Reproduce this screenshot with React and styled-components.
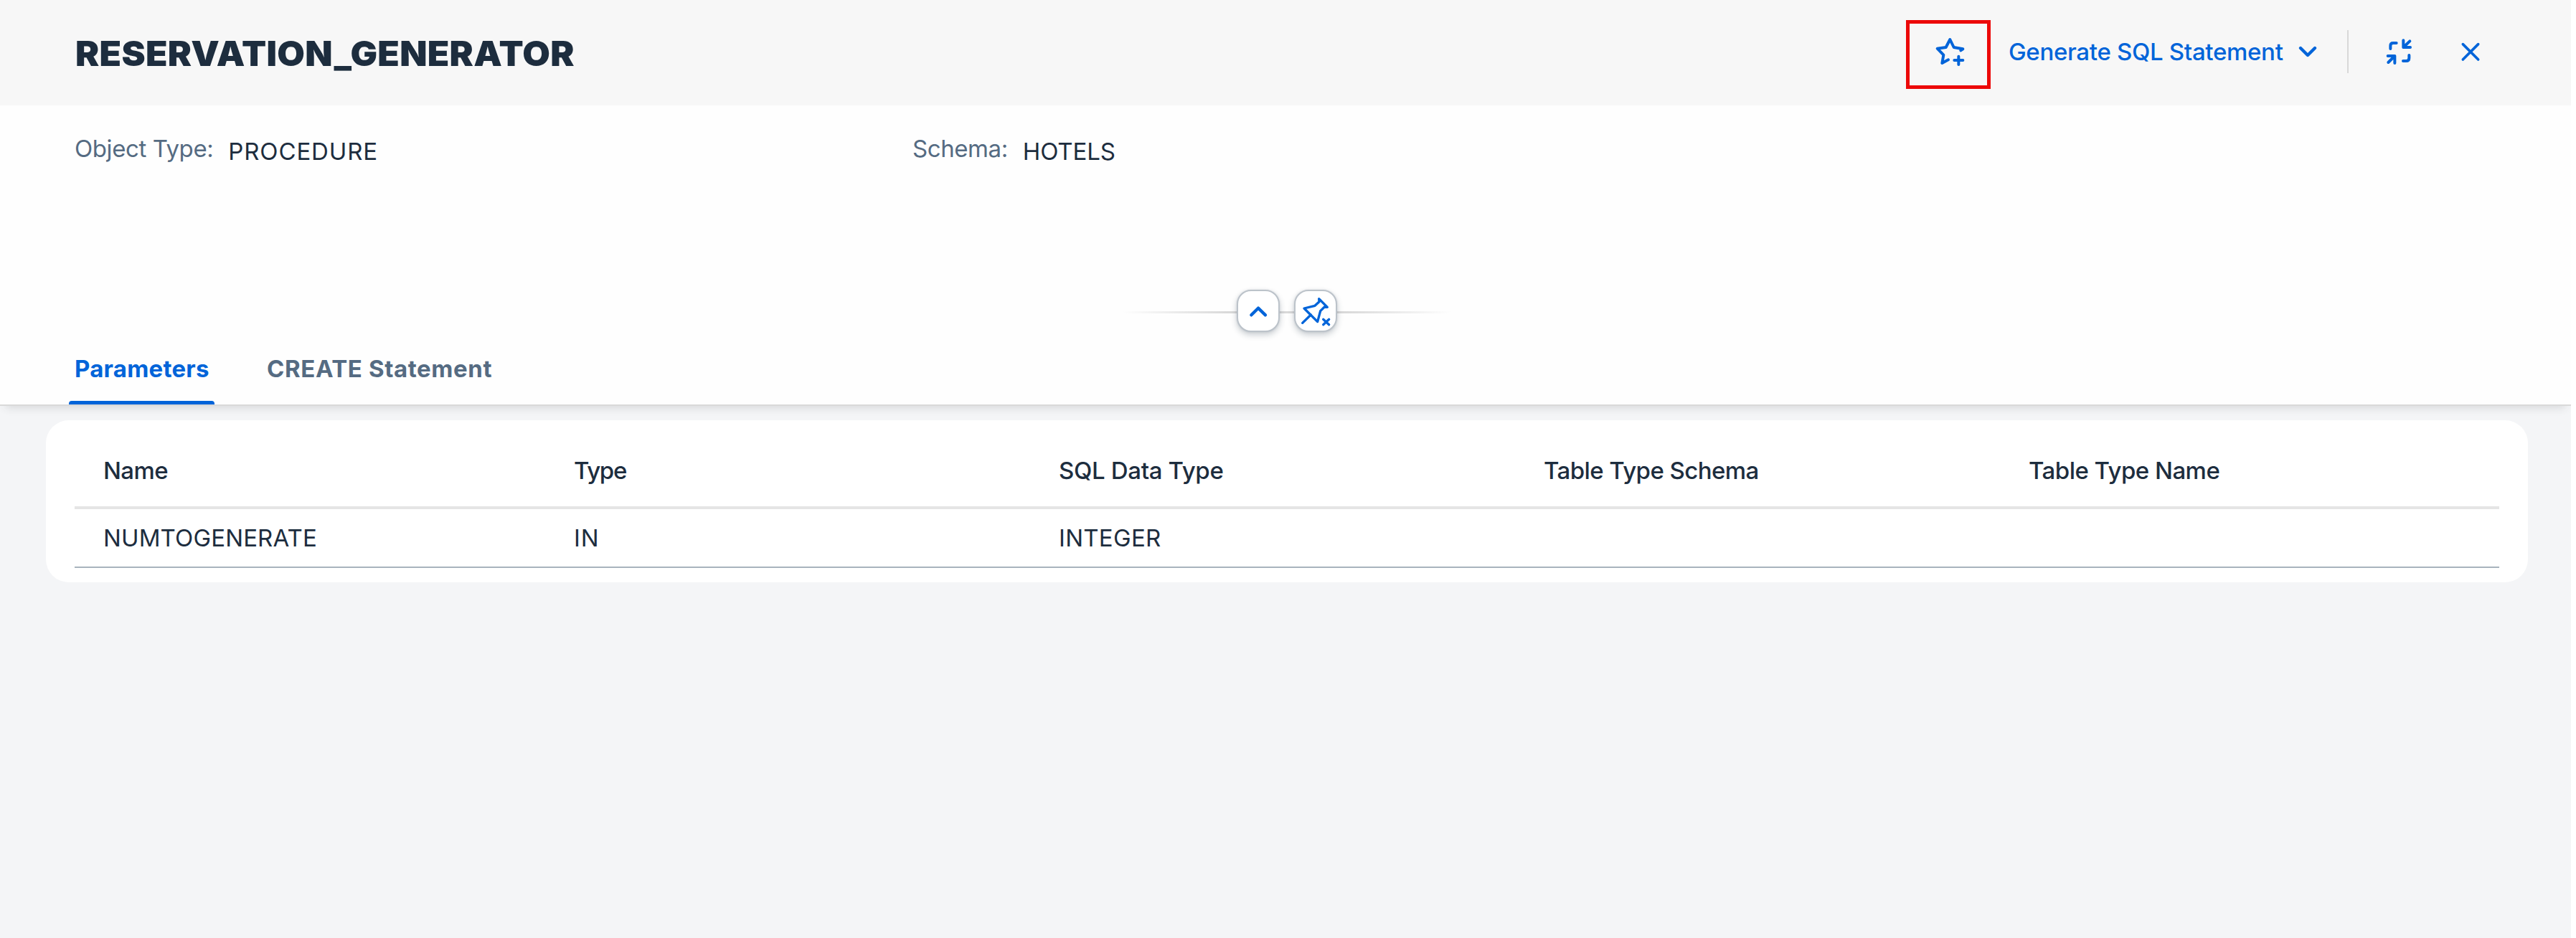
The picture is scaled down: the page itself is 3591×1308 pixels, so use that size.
import React from "react";
import styled, { createGlobalStyle } from "styled-components";

const BLUE = "#0064d9";
const INK = "#1d2d3e";
const MUTED = "#556b82";

const GlobalStyle = createGlobalStyle`
  *, *::before, *::after { box-sizing: border-box; }
  body { margin: 0; background: #fff; }
  button { font: inherit; color: inherit; background: none; border: 0; padding: 0; margin: 0; }
`;

const Page = styled.div`
  display: flex;
  flex-direction: column;
  width: 3584px;
  height: 1308px;
  overflow: hidden;
  background: #fff;
  color: ${INK};
  font-family: Inter, "Liberation Sans", sans-serif;
  font-size: 33px;
  line-height: 40px;
  white-space: nowrap;
`;

const TitleBar = styled.header`
  display: flex;
  justify-content: space-between;
  height: 147px;
  padding: 0 126px 0 104.5px;
  background: #f7f7f7;
`;

const Title = styled.h1`
  margin: 1px 0 0;
  font-size: 47.5px;
  font-weight: 900;
  line-height: 147px;
  letter-spacing: 0.25px;
  transform: scaleX(1.05);
  transform-origin: left center;
`;

const Actions = styled.div`
  display: flex;
  align-items: center;
  height: 144px;
  color: ${BLUE};
`;

const Highlight = styled.div`
  align-self: flex-start;
  width: 118px;
  height: 96px;
  margin-top: 28px;
  padding: 15px 0 0 33px;
  border: 5px solid #ec0808;
`;

const MenuButton = styled.button`
  display: flex;
  align-items: center;
  justify-content: space-between;
  width: 430px;
  margin-left: 25px;
  font-weight: 550;
  letter-spacing: -0.31px;
`;

const IconButton = styled.button`
  display: flex;
  margin-left: ${(p) => p.$gap || 0}px;
`;

const Divider = styled.div`
  width: 2px;
  height: 60px;
  margin-left: 42px;
  background: #d9d9d9;
`;

const Icon = styled.svg`
  display: block;
  flex: none;
  width: ${(p) => p.$size}px;
  height: ${(p) => p.$size}px;
  fill: none;
  stroke: currentColor;
  stroke-linecap: round;
  stroke-linejoin: round;
`;

const ObjectHeader = styled.section`
  position: relative;
  z-index: 1;
  display: flex;
  flex-direction: column;
  height: 419px;
  background: #fefefe;
  border-bottom: 2px solid #d9d9d9;
  box-shadow: 0 10px 12px -8px rgba(50, 53, 58, 0.16);
`;

const Fields = styled.dl`
  display: grid;
  grid-template-columns: 1168px 1168px;
  align-content: start;
  height: 257px;
  margin: 0;
  padding: 40px 0 0 104px;
`;

const Field = styled.div`
  display: flex;
  gap: 21px;
`;

const FieldLabel = styled.dt`
  color: ${MUTED};
  letter-spacing: -0.42px;
`;

const FieldValue = styled.dd`
  margin: 4px 0 0;
  letter-spacing: ${(p) => p.$track || 0}px;
`;

const ToggleStrip = styled.div`
  display: flex;
  justify-content: center;
  gap: 20px;
  width: 458px;
  height: 60px;
  margin-left: 1565px;
  background: linear-gradient(90deg, rgba(217, 217, 217, 0), #d9d9d9 32%, #d9d9d9 68%, rgba(217, 217, 217, 0)) 0 30px / 100% 3px no-repeat;
`;

const ToggleButton = styled.button`
  width: 60px;
  height: 59px;
  color: ${BLUE};
  background: #fff;
  border: 2px solid #bcc3ca;
  border-radius: 20px;
  box-shadow: 0 4px 8px rgba(34, 53, 72, 0.24), 0 0 3px rgba(34, 53, 72, 0.12);
`;

const Tabs = styled.nav`
  display: flex;
  gap: 65px;
  height: 100px;
  padding-left: 96px;
`;

const Tab = styled.button`
  display: flex;
  flex-direction: column;
  justify-content: space-between;
  padding-top: 30px;
  color: ${(p) => (p.$active ? BLUE : MUTED)};
  font-weight: ${(p) => (p.$active ? 700 : 680)};
  letter-spacing: ${(p) => p.$track}px;
  width: ${(p) => (p.$active ? "203px" : "auto")};

  span { padding: 0 8px; }

  &::after {
    content: "";
    width: 100%;
    height: 5px;
    border-radius: 4px 4px 0 0;
    background: ${(p) => (p.$active ? BLUE : "transparent")};
  }
`;

const Content = styled.main`
  flex: 1;
  padding: 20px 60px 0 64px;
  background: #f4f5f7;
`;

const Card = styled.div`
  position: relative;
  z-index: 2;
  height: 226px;
  padding: 0 40px;
  background: #fff;
  border-radius: 32px;
`;

const Row = styled.div`
  display: grid;
  grid-template-columns: 656px 676px 676px 676px 1fr;
  align-items: center;
  height: ${(p) => (p.$head ? 124 : 82)}px;
  padding-top: ${(p) => (p.$head ? 20 : 0)}px;
  border-bottom: ${(p) => (p.$head ? "4px solid #e5e5e5" : "2px solid #a8b3bd")};
  font-weight: ${(p) => (p.$head ? 550 : 400)};
`;

const Cell = styled.div`
  padding-left: 40px;
  letter-spacing: ${(p) => p.$track || 0}px;
`;

const columns = [
  { label: "Name", track: -0.6 },
  { label: "Type", track: -1.3 },
  { label: "SQL Data Type", track: -0.34 },
  { label: "Table Type Schema", track: -0.58 },
  { label: "Table Type Name", track: -0.53 },
];

const values = [
  { label: "NUMTOGENERATE", track: 0.13 },
  { label: "IN", track: 0.9 },
  { label: "INTEGER", track: 0.28 },
  { label: "" },
  { label: "" },
];

export default function App() {
  return (
    <>
      <GlobalStyle />
      <Page>
        <TitleBar>
          <Title>RESERVATION_GENERATOR</Title>
          <Actions>
            <Highlight>
              <IconButton aria-label="Add to favorites">
                <Icon $size={48} viewBox="165 144 144 144" strokeWidth="12">
                  <path d="M228 250 L202 264 L208 230 L182 203 L218 198 L235 165 L251 198 L289 205 L280 211" />
                  <path d="M271 236 V270 M253 252 H289" />
                </Icon>
              </IconButton>
            </Highlight>
            <MenuButton>
              Generate SQL Statement
              <Icon $size={26} viewBox="312 177 78 78" strokeWidth="13">
                <path d="M321 201 L351 231 L381 201" />
              </Icon>
            </MenuButton>
            <Divider />
            <IconButton $gap={51} aria-label="Exit full screen">
              <Icon $size={40} viewBox="675 156 120 120" strokeWidth="12">
                <path d="M697 204 V191 Q697 180 708 180 H722" />
                <path d="M751 169 V198 H780 M751 198 L778 172" />
                <path d="M686 234 H715 V264 M715 234 L688 261" />
                <path d="M775 231 V243 Q775 255 763 255 H750" />
              </Icon>
            </IconButton>
            <IconButton $gap={65} aria-label="Close">
              <Icon $size={28} viewBox="990 174 84 84" strokeWidth="11">
                <path d="M1000 185 L1064 249 M1064 185 L1000 249" />
              </Icon>
            </IconButton>
          </Actions>
        </TitleBar>

        <ObjectHeader>
          <Fields>
            <Field>
              <FieldLabel>Object Type:</FieldLabel>
              <FieldValue $track={0.86}>PROCEDURE</FieldValue>
            </Field>
            <Field>
              <FieldLabel>Schema:</FieldLabel>
              <FieldValue $track={-0.1}>HOTELS</FieldValue>
            </Field>
          </Fields>
          <ToggleStrip>
            <ToggleButton aria-label="Collapse header">
              <Icon $size={56} viewBox="558 78 168 168" strokeWidth="13">
                <path d="M613 178 L642 149 L672 178" />
              </Icon>
            </ToggleButton>
            <ToggleButton aria-label="Unpin header">
              <Icon $size={56} viewBox="798 78 168 168" strokeWidth="10">
                <path d="M896 110 L931 145 L919 144 L902 161 L890 206 L834 150 L879 139 L897 122 Z" />
                <path d="M827 211 L862 177" />
                <path d="M914 196 L938 218 M938 196 L914 218" />
              </Icon>
            </ToggleButton>
          </ToggleStrip>
          <Tabs>
            <Tab $active $track={0.23}><span>Parameters</span></Tab>
            <Tab $track={0.6}><span>CREATE Statement</span></Tab>
          </Tabs>
        </ObjectHeader>

        <Content>
          <Card>
            <Row $head>
              {columns.map((c) => <Cell key={c.label} $track={c.track}>{c.label}</Cell>)}
            </Row>
            <Row>
              {values.map((v, i) => <Cell key={i} $track={v.track}>{v.label}</Cell>)}
            </Row>
          </Card>
        </Content>
      </Page>
    </>
  );
}
